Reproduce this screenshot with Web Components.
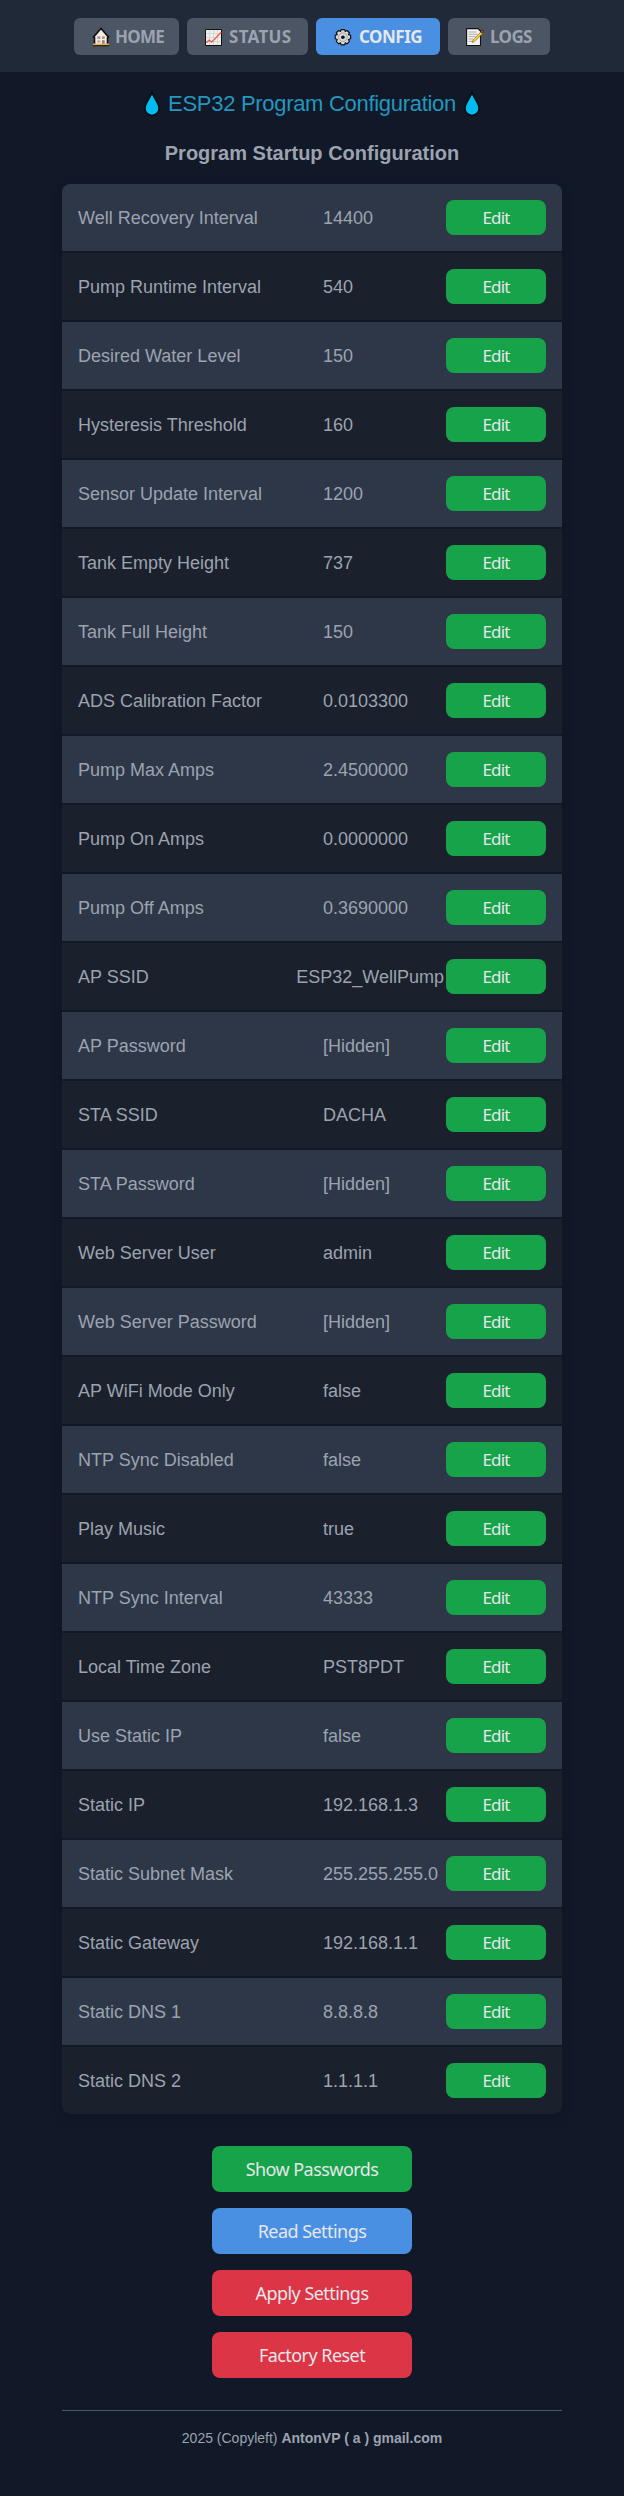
<!DOCTYPE html>
<html lang="en">
<head>
<meta charset="utf-8">
<title>ESP32 Program Configuration</title>
<style>
html,body{margin:0;background:#111827}
body{font-family:"Liberation Sans",Arial,sans-serif;color:#9ca3af}
</style>
</head>
<body>
<pump-config-page></pump-config-page>
<script>
const define = (name, html, after) => customElements.define(name, class extends HTMLElement {
  connectedCallback() {
    if (this.shadowRoot) return;
    const root = this.attachShadow({mode: 'open'});
    root.innerHTML = html;
    if (after) after(root, this);
  }
});

const icons = {
  home: `<svg viewBox="0 0 18 20"><path d="M2 9.5 9 1.8l7 7.7v8H2z" fill="#f3ece8"/><path d="M1 10.6 9 1.5l8 9.1M2.5 10v7M15.5 10v7" fill="none" stroke="#111" stroke-width="1.6"/><path d="M5.3 9.3h3v2.8h-3zM10 9.3h2.8v2.8H10zM5.3 13.5h3v2h-3z" fill="#b39b90"/><path d="M10 13.2h2.7v4H10z" fill="#9b8074"/><path d="M1 16.6h16v1.3H1z" fill="#f2b632"/><path d="M1 18.1h16v1.2H1z" fill="#28231b"/></svg>`,
  chart: `<svg viewBox="0 0 18 20"><path d="M.5 2.5h16v16H.5z" fill="#eee" stroke="#111"/><path d="M4.5 3v15M8.5 3v15M12.5 3v15M1 6.5h15M1 10.5h15M1 14.5h15" stroke="#d2d2d2" stroke-width=".8"/><path d="m1.2 15.7 3-2.5 2.5 2 9.6-10" fill="none" stroke="#f15b3c" stroke-width="1.3"/></svg>`,
  gear: `<svg viewBox="0 0 18 20"><g fill="#d8d8d8" stroke="#111" stroke-width="1.2"><path d="M7.1 2.6h3.6l.5 1.8 1.8-.9 2.4 2.3-.9 1.8 2.1.7v3.5l-2.1.7.9 1.9-2.4 2.4-1.8-.9-.5 1.9H7.1l-.6-1.9-1.8.9-2.4-2.4.9-1.9-2-.7V8.3l2-.7-.9-1.8 2.4-2.3 1.8.9z" stroke-linejoin="round"/></g><circle cx="8.9" cy="10.2" r="4.3" fill="none" stroke="#999" stroke-width=".8"/><circle cx="8.9" cy="10.2" r="1.8" fill="#111"/></svg>`,
  memo: `<svg viewBox="0 0 18 20"><path d="M.6 1.6H12l2.5 2.5v14.4H.6z" fill="#f4f4f4" stroke="#111" stroke-width="1.1"/><path d="M2.5 5h8M2.5 7.3h9M2.5 9.6h7M2.5 12h4.5M2.5 14.3h3.5" stroke="#aaa"/><path d="m6 15.5 1-2.6 8.5-8.6 1.7 1.7-8.7 8.6z" fill="#f9c832" stroke="#5a4b1d" stroke-width=".5"/><path d="m14.8 4.8 1-1.2c.8-.6 2 .5 1.5 1.4l-1 1.2z" fill="#e8505b" stroke="#111" stroke-width=".7"/></svg>`
};

define('nav-tab', `<style>
:host{display:flex;align-items:center;box-sizing:border-box;height:37px;padding-left:18px;border-radius:6px;background:#4b5563;color:#9ca3af;font:700 17px "Noto Sans",sans-serif;letter-spacing:var(--ls,0)}
:host([active]){background:#4a90e2;color:#e5e7eb}
i{display:block;width:18px;height:20px;margin-right:var(--gap,5px)}
svg{display:block;width:18px;height:20px}
span{white-space:nowrap}
</style><i></i><span><slot></slot></span>`, (r, el) => { r.querySelector('i').innerHTML = icons[el.getAttribute('icon')]; });

define('nav-bar', `<style>
:host{display:flex;justify-content:center;gap:8px;box-sizing:border-box;height:72px;padding-top:18px;background:#1f2937}
</style><slot></slot>`);

define('water-drop', `<style>
:host{display:block;width:16px;height:26px}svg{display:block}
</style><svg width="16" height="26" viewBox="0 0 16 26"><path d="M8 1.8C6.4 6.5 1 12.5 1 17.4a7 7 0 0 0 14 0C15 12.5 9.6 6.5 8 1.8z" fill="#00bcf2" stroke="#080b10" stroke-width="1.5"/></svg>`);

define('page-title', `<style>
:host{display:flex;justify-content:center;align-items:center;gap:8px;height:26px}
h1{margin:0;font-size:22px;font-weight:400;line-height:26px;letter-spacing:-.3px;color:#2596be;white-space:nowrap}
</style><water-drop></water-drop><h1><slot></slot></h1><water-drop></water-drop>`);

define('action-button', `<style>
:host{display:block;width:200px;height:46px;--bg:#16a34a}
:host([kind=read]){--bg:#4a90e2}
:host([kind=danger]){--bg:#dc3545}
:host([kind=edit]){width:100px;height:35px;flex:none}
button{display:block;width:100%;height:100%;padding:0;border:0;border-radius:8px;background:var(--bg);color:#e5e7eb;font:400 18px "Noto Sans",sans-serif;letter-spacing:-.55px}
:host([kind=edit]) button{font-size:17px;letter-spacing:-.8px}
</style><button type="button"><slot></slot></button>`);

define('setting-row', `<style>
:host{display:flex;align-items:center;height:67px;box-sizing:border-box;padding:16px;font-size:18px;line-height:21px;background:#2d3748}
:host([alt]){background:#1a202c}
.name{flex:1;white-space:nowrap;padding-top:2px}
.value{min-width:121px;margin-right:2px;white-space:nowrap;padding-top:2px}
</style><span class="name"><slot name="name"></slot></span><span class="value"><slot></slot></span><action-button kind="edit">Edit</action-button>`);

const settings = [
  ['Well Recovery Interval','14400'],['Pump Runtime Interval','540'],['Desired Water Level','150'],['Hysteresis Threshold','160'],
  ['Sensor Update Interval','1200'],['Tank Empty Height','737'],['Tank Full Height','150'],['ADS Calibration Factor','0.0103300'],
  ['Pump Max Amps','2.4500000'],['Pump On Amps','0.0000000'],['Pump Off Amps','0.3690000'],['AP SSID','ESP32_WellPump'],
  ['AP Password','[Hidden]'],['STA SSID','DACHA'],['STA Password','[Hidden]'],['Web Server User','admin'],
  ['Web Server Password','[Hidden]'],['AP WiFi Mode Only','false'],['NTP Sync Disabled','false'],['Play Music','true'],
  ['NTP Sync Interval','43333'],['Local Time Zone','PST8PDT'],['Use Static IP','false'],['Static IP','192.168.1.3'],
  ['Static Subnet Mask','255.255.255.0'],['Static Gateway','192.168.1.1'],['Static DNS 1','8.8.8.8'],['Static DNS 2','1.1.1.1']
];

define('settings-list', `<style>
:host{display:flex;flex-direction:column;gap:2px;width:500px;border-radius:8px;overflow:hidden;background:#111827;box-shadow:0 4px 12px rgba(0,0,0,.15)}
</style>${settings.map(([n, v], i) => `<setting-row${i % 2 ? ' alt' : ''}><span slot="name">${n}</span>${v}</setting-row>`).join('')}`);

define('page-footer', `<style>
:host{display:block;width:500px;border-top:1px solid #4b5563;padding-top:19px;text-align:center;font-size:14px;line-height:16px}
</style><slot></slot>`);

define('pump-config-page', `<style>
:host{display:block;min-height:2496px;background:#111827}
main{display:flex;flex-direction:column;align-items:center}
page-title{margin-top:19px}
h2{margin:25px 0 0;font-size:20px;line-height:23px;font-weight:700;color:#9ca3af}
settings-list{margin-top:19px}
.actions{display:flex;flex-direction:column;gap:16px;margin-top:32px}
page-footer{margin-top:32px}
</style>
<nav-bar>
<nav-tab icon="home" style="width:105px;--ls:-.75px">HOME</nav-tab>
<nav-tab icon="chart" style="width:121px;--gap:6px;--ls:.3px">STATUS</nav-tab>
<nav-tab icon="gear" active style="width:124px;--gap:7px;--ls:-.5px">CONFIG</nav-tab>
<nav-tab icon="memo" style="width:102px;--gap:6px;--ls:-.6px">LOGS</nav-tab>
</nav-bar>
<main>
<page-title>ESP32 Program Configuration</page-title>
<h2>Program Startup Configuration</h2>
<settings-list></settings-list>
<div class="actions">
<action-button>Show Passwords</action-button>
<action-button kind="read">Read Settings</action-button>
<action-button kind="danger">Apply Settings</action-button>
<action-button kind="danger">Factory Reset</action-button>
</div>
<page-footer>2025 (Copyleft) <b>AntonVP ( a ) gmail.com</b></page-footer>
</main>`);
</script>
</body>
</html>
